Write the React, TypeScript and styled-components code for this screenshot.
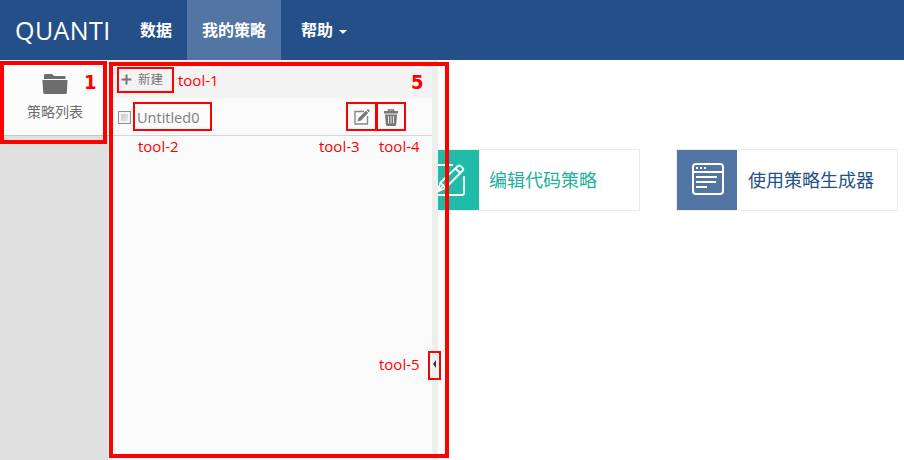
import React from "react";
import styled, { createGlobalStyle } from "styled-components";

const GlobalStyle = createGlobalStyle`
  * { box-sizing: border-box; }
  body {
    margin: 0;
    background: #fff;
    font-family: "Open Sans", "Noto Sans CJK SC", sans-serif;
    overflow: hidden;
  }
`;

const Page = styled.div`
  position: relative;
  display: flex;
  flex-direction: column;
  width: 904px;
  height: 460px;
  overflow: hidden;
`;

const Header = styled.header`
  display: flex;
  flex: none;
  height: 60px;
  background: #254f88;
  color: #fff;
`;

const Brand = styled.div`
  width: 124px;
  padding-left: 15px;
  font-size: 25px;
  line-height: 61px;
  letter-spacing: 0.45px;
`;

const NavItem = styled.a<{ $width: number; $active?: boolean; $indent?: number }>`
  display: flex;
  align-items: center;
  width: ${(p) => p.$width}px;
  padding-left: ${(p) => p.$indent ?? 15}px;
  font-size: 16px;
  font-weight: 700;
  line-height: 60px;
  white-space: nowrap;
  background: ${(p) => (p.$active ? "#5375a4" : "transparent")};
`;

const Caret = styled.span`
  margin: 4px 0 0 6px;
  border: 4px solid transparent;
  border-top-color: #fff;
  border-bottom: 0;
`;

const Body = styled.div`
  display: flex;
  flex: 1;
  min-height: 0;
`;

const Sidebar = styled.aside`
  flex: none;
  width: 108px;
  background: #e0e0e0;
`;

const SidebarItem = styled.div`
  display: flex;
  flex-direction: column;
  align-items: center;
  height: 76px;
  padding: 14px 0 0 2px;
  background: #fcfcfc;
  border-bottom: 1px solid #c6c6c6;
  color: #6d6d6d;
  font-size: 14px;
  line-height: 20px;
  svg { display: block; margin-bottom: 8px; }
`;

const Panel = styled.section`
  flex: none;
  width: 324px;
  background: #fafafa;
`;

const Toolbar = styled.div`
  display: flex;
  align-items: center;
  height: 38px;
  padding: 0 0 0 13px;
  background: #f3f3f3;
  color: #777;
  font-size: 12.5px;
  span { margin-left: 6px; line-height: 16px; padding-top: 1px; }
`;

const StrategyRow = styled.div`
  display: flex;
  align-items: center;
  height: 38px;
  padding: 0 34px 0 10px;
  border-bottom: 1px solid #d5d5d5;
  color: #808080;
`;

const Checkbox = styled.span`
  width: 13px;
  height: 13px;
  margin-top: 2px;
  border: 1px solid #8e8f8f;
  background: linear-gradient(135deg, #bcc1c8, #f2f2f2);
  box-shadow: inset 0 0 0 2px #f4f4f4;
`;

const StrategyName = styled.span`
  flex: 1;
  margin-left: 6px;
  font-size: 14.5px;
  line-height: 20px;
  padding-top: 2px;
`;

const RowIcons = styled.div`
  display: flex;
  gap: 14px;
  padding-top: 1px;
  svg { display: block; }
`;

const Gutter = styled.div`
  display: flex;
  flex: none;
  width: 6px;
  padding: 300px 0 0 1px;
  background: #eee;
`;

const Collapse = styled.span`
  height: 0;
  border: 4px solid transparent;
  border-right: 3px solid #333;
  border-left: 0;
`;

const Workspace = styled.main`
  display: flex;
  flex: 1;
  gap: 36px;
  min-width: 0;
  padding-top: 89px;
  overflow: hidden;
`;

const Card = styled.div<{ $color: string; $covered?: boolean }>`
  display: flex;
  flex: none;
  width: 222px;
  height: 62px;
  margin-left: ${(p) => (p.$covered ? "-20px" : "0")};
  border: 1px solid #ececec;
  color: ${(p) => p.$color};
  font-size: 18px;
  line-height: 60px;
`;

const CardIcon = styled.div<{ $color: string }>`
  display: flex;
  align-items: center;
  justify-content: center;
  width: 60px;
  margin-right: ${(p) => (p.$color === "#20bca7" ? "10px" : "11px")};
  background: ${(p) => p.$color};
`;

const Marker = styled.div<{ $x: number; $y: number; $w: number; $h: number; $line?: number }>`
  position: absolute;
  left: ${(p) => p.$x}px;
  top: ${(p) => p.$y}px;
  width: ${(p) => p.$w}px;
  height: ${(p) => p.$h}px;
  border: ${(p) => p.$line ?? 2}px solid #f00;
`;

const MarkerLabel = styled.span<{ $x: number; $y: number; $big?: boolean }>`
  position: absolute;
  left: ${(p) => p.$x}px;
  top: ${(p) => p.$y}px;
  color: #f00;
  white-space: nowrap;
  font: ${(p) =>
    p.$big
      ? '700 20px/20px "DejaVu Sans Condensed", "DejaVu Sans", sans-serif'
      : '400 15px/20px "Open Sans", sans-serif'};
`;

const markers = [
  { x: 0, y: 61, w: 107, h: 83, line: 4 },
  { x: 109, y: 62, w: 340, h: 396, line: 4 },
  { x: 117, y: 67, w: 57, h: 26 },
  { x: 133, y: 102, w: 79, h: 29 },
  { x: 346, y: 102, w: 31, h: 29 },
  { x: 376, y: 102, w: 30, h: 29 },
  { x: 428, y: 351, w: 13, h: 29 },
];

const labels = [
  { text: "tool-1", x: 178, y: 70 },
  { text: "tool-2", x: 138, y: 136 },
  { text: "tool-3", x: 319, y: 136 },
  { text: "tool-4", x: 379, y: 136 },
  { text: "tool-5", x: 379, y: 354 },
  { text: "1", x: 84, y: 72, big: true },
  { text: "5", x: 411, y: 72, big: true },
];

const FolderIcon = () => (
  <svg width="26" height="20" viewBox="0 0 26 20" fill="#6d6d6d">
    <path d="M2 5V1.2Q2 0 3.2 0H10L12 2H22.5Q23.5 2 23.5 3V5Z" />
    <path d="M1 6H25Q25.6 6 25.5 7L24.8 19Q24.7 20 23.7 20H2.3Q1.4 20 1.3 19L.4 7Q.3 6 1 6Z" />
  </svg>
);

const PlusIcon = () => (
  <svg width="11" height="11" viewBox="0 0 11 11">
    <path d="M5.5 .5V10.5M.5 5.5H10.5" stroke="#777" strokeWidth="2" />
  </svg>
);

const EditIcon = () => (
  <svg width="16" height="16" viewBox="0 0 16 16">
    <path d="M10 2.5H1V15H13.5V7" fill="none" stroke="#888" strokeWidth="1.4" />
    <path d="M3.5 12.5L4.5 9L12 1.8L14.2 4L7 11.4Z M12.7 1.3L13.5 .5Q14 .1 14.6 .6L15.4 1.4Q16 2 15.4 2.6L14.7 3.3Z" fill="#777" />
  </svg>
);

const TrashIcon = () => (
  <svg width="14" height="17" viewBox="0 0 14 17">
    <path d="M4.5 2.5V1H9.5V2.5" fill="none" stroke="#777" strokeWidth="1.4" />
    <path d="M0 2H14V4.5H0Z M1 5.5H13L12.2 15.5Q12.1 17 10.8 17H3.2Q1.9 17 1.8 15.5Z" fill="#777" />
    <path d="M4.5 7V14.5M7 7V14.5M9.5 7V14.5" stroke="#e8e8e8" strokeWidth="1" />
  </svg>
);

const ComposeIcon = () => (
  <svg width="34" height="34" viewBox="0 0 34 34" fill="none" stroke="#fff" strokeWidth="1.8" strokeLinejoin="round">
    <path d="M21 2H4Q2 2 2 4V30Q2 32 4 32H30Q32 32 32 30V13" />
    <path d="M5.5 28.5L8.5 19.5L26 3Q27.3 2 28.5 3L30.8 5.2Q31.8 6.4 30.8 7.5L13.5 25Z M23.5 5.5L28.3 10M8.5 19.5L13.5 25M6 28L12 21.5" />
  </svg>
);

const BrowserIcon = () => (
  <svg width="34" height="34" viewBox="-2 0 34 34" fill="none" stroke="#fff">
    <rect x="1" y="1" width="30" height="30" rx="3" strokeWidth="2" />
    <path d="M1 9H31M4 14H25M4 19H24M4 24H15" strokeWidth="2" />
    <path d="M4 5H6M8 5H10M12 5H14" strokeWidth="2" />
  </svg>
);

export default function App() {
  return (
    <Page>
      <GlobalStyle />
      <Header>
        <Brand>QUANTI</Brand>
        <NavItem $width={63} $indent={16}>数据</NavItem>
        <NavItem $width={94} $active>我的策略</NavItem>
        <NavItem $width={86} $indent={20}>
          帮助
          <Caret />
        </NavItem>
      </Header>
      <Body>
        <Sidebar>
          <SidebarItem>
            <FolderIcon />
            策略列表
          </SidebarItem>
        </Sidebar>
        <Panel>
          <Toolbar>
            <PlusIcon />
            <span>新建</span>
          </Toolbar>
          <StrategyRow>
            <Checkbox />
            <StrategyName>Untitled0</StrategyName>
            <RowIcons>
              <EditIcon />
              <TrashIcon />
            </RowIcons>
          </StrategyRow>
        </Panel>
        <Gutter>
          <Collapse />
        </Gutter>
        <Workspace>
          <Card $color="#20b09b" $covered>
            <CardIcon $color="#20bca7"><ComposeIcon /></CardIcon>
            编辑代码策略
          </Card>
          <Card $color="#254f88">
            <CardIcon $color="#5375a4"><BrowserIcon /></CardIcon>
            使用策略生成器
          </Card>
        </Workspace>
      </Body>
      {markers.map((m) => (
        <Marker key={`${m.x}-${m.y}`} $x={m.x} $y={m.y} $w={m.w} $h={m.h} $line={m.line} />
      ))}
      {labels.map((l) => (
        <MarkerLabel key={l.text} $x={l.x} $y={l.y} $big={l.big}>{l.text}</MarkerLabel>
      ))}
    </Page>
  );
}
